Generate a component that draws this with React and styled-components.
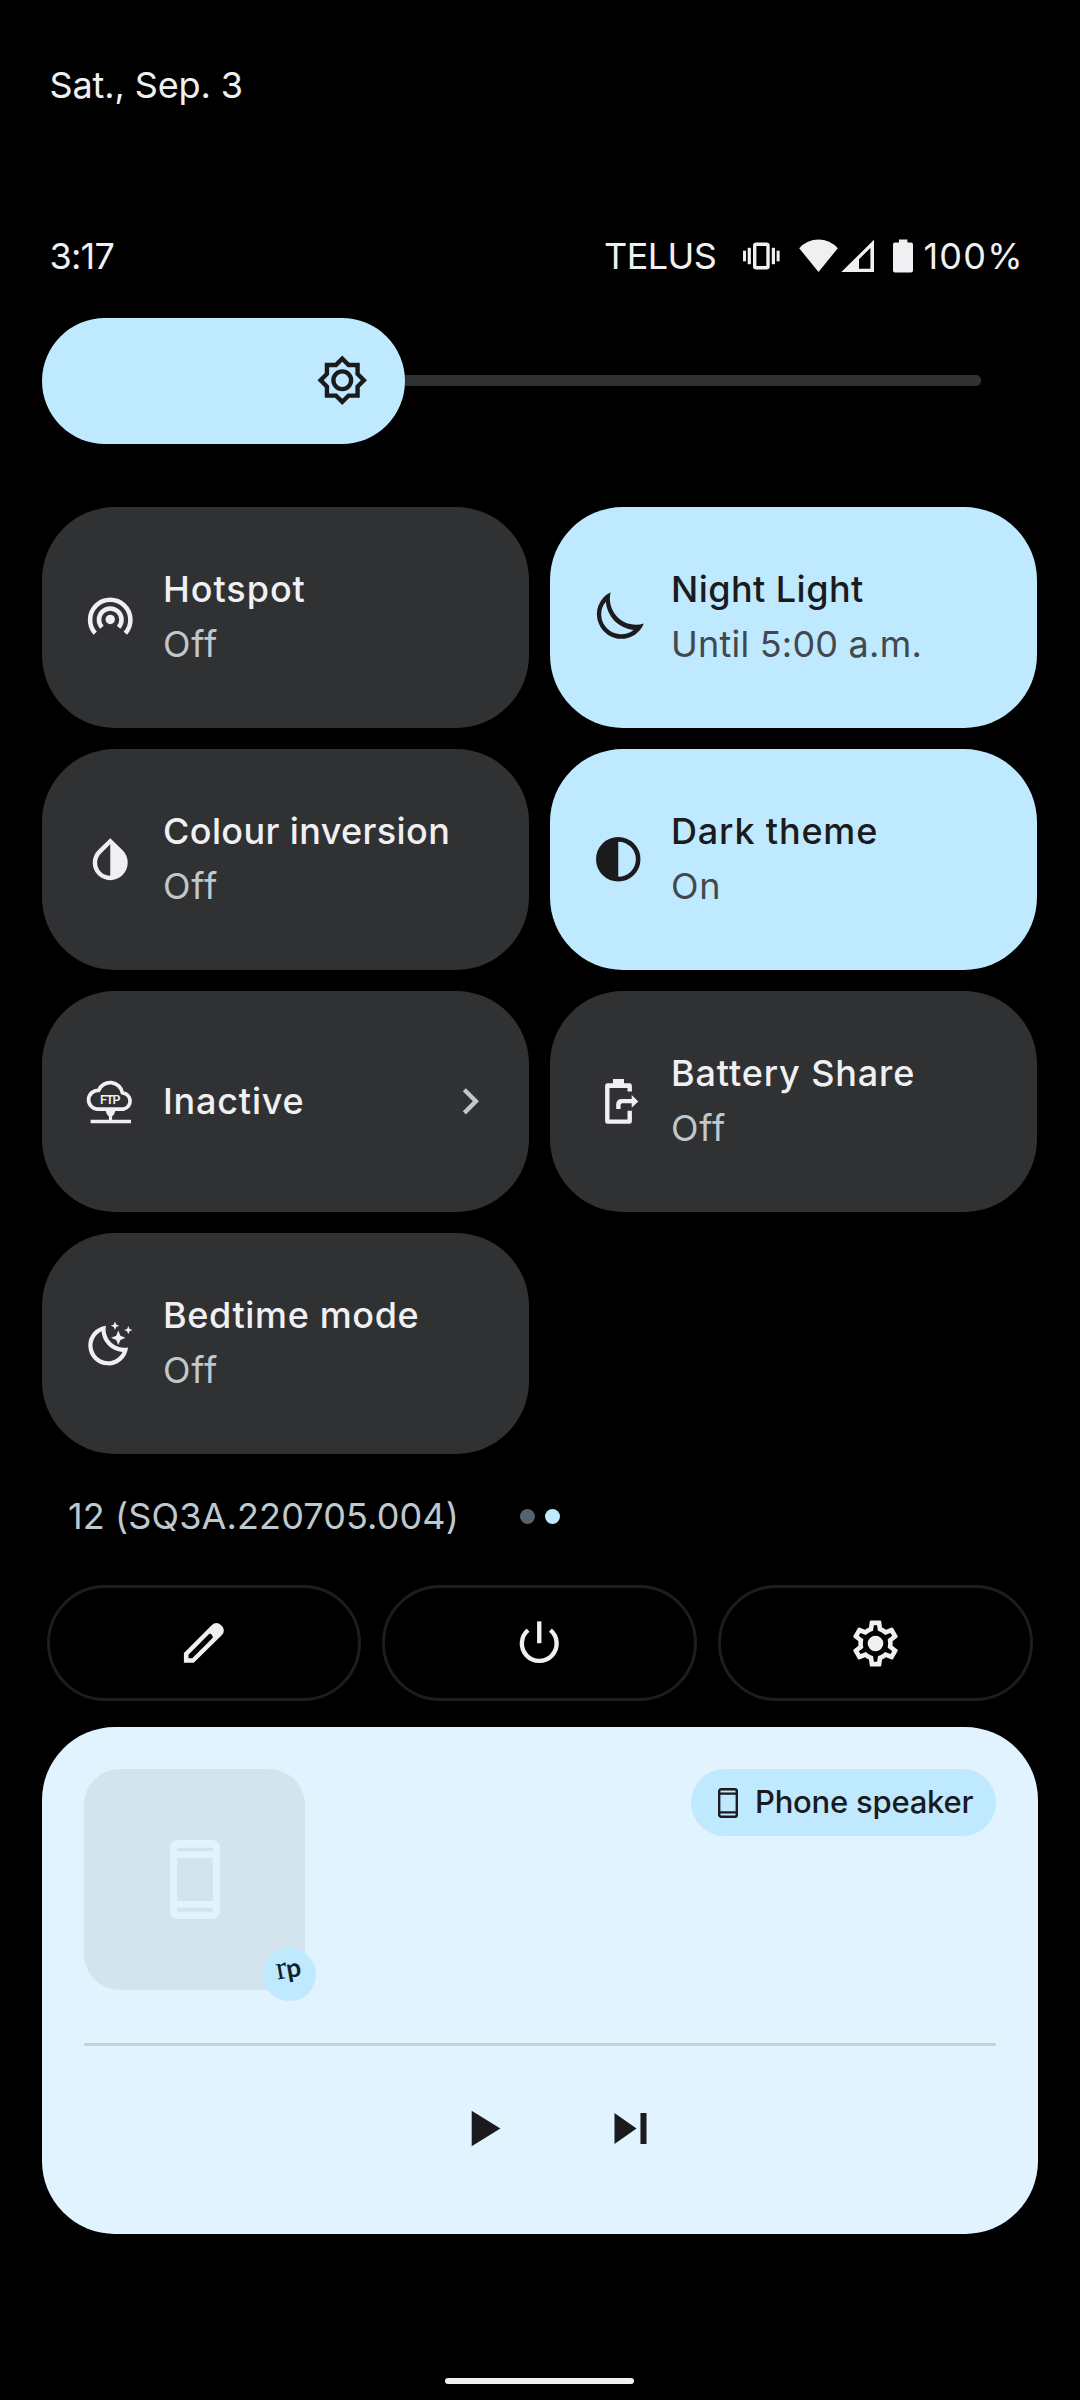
import React from "react";
import styled, { createGlobalStyle } from "styled-components";

const color = {
  surface: "#303133",
  accent: "#bfe9ff",
  light: "#f0f0f3",
  muted: "#bfc8cc",
  dark: "#1b1b1d",
  darkMuted: "#42484b",
  card: "#e0f3ff",
};

const GlobalStyle = createGlobalStyle`
  *, *::before, *::after { box-sizing: border-box; }
  body { margin: 0; background: #000; }
`;

const Screen = styled.main`
  width: 1080px;
  height: 2400px;
  display: flex;
  flex-direction: column;
  overflow: hidden;
  background: #000;
  color: ${color.light};
  font-family: Inter, Roboto, "Liberation Sans", sans-serif;
  font-size: 36px;
  line-height: 44px;
`;

const Label = styled.span`
  white-space: nowrap;
  letter-spacing: ${(p) => p.$tracking || 0}px;
`;

const DateRow = styled.header`
  padding: 63px 0 0 49.5px;
`;

const StatusBar = styled.div`
  display: flex;
  justify-content: space-between;
  align-items: center;
  height: 44px;
  margin-top: 127px;
  padding: 0 56px 0 49.5px;
`;

const StatusIcons = styled.div`
  display: flex;
  align-items: center;
  width: 420px;
`;

const Carrier = styled.div`
  width: 128px;
  display: flex;
`;

const StatusGlyph = styled.svg`
  flex: none;
  display: block;
  width: ${(p) => p.$w}px;
  height: 34px;
  margin-left: ${(p) => p.$gap}px;
  fill: ${color.light};
`;

const BatteryLevel = styled.div`
  margin-left: 10px;
  display: flex;
`;

const Brightness = styled.div`
  display: flex;
  align-items: center;
  margin: 40px 99px 0 42px;
`;

const BrightnessFill = styled.div`
  display: flex;
  align-items: center;
  justify-content: flex-end;
  width: 363px;
  height: 126px;
  padding: 0 36.5px 1px 0;
  border-radius: 63px;
  background: ${color.accent};
  color: ${color.dark};
`;

const BrightnessTrack = styled.div`
  flex: 1;
  height: 11px;
  margin-bottom: 1px;
  border-radius: 0 5px 5px 0;
  background: ${color.surface};
`;

const Icon = styled.svg`
  flex: none;
  display: block;
  width: ${(p) => p.$size || 52.5}px;
  height: ${(p) => p.$size || 52.5}px;
  fill: currentColor;
`;

const TileGrid = styled.section`
  display: grid;
  grid-template-columns: 487px 487px;
  grid-auto-rows: 221px;
  gap: 21px;
  margin: 63px 0 0 42px;
`;

const Tile = styled.div`
  display: flex;
  align-items: center;
  gap: 26.5px;
  padding: 0 33px 0 42px;
  border-radius: 73px;
  background: ${(p) => (p.$active ? color.accent : color.surface)};
  color: ${(p) => (p.$active ? color.dark : color.light)};
`;

const TileText = styled.div`
  flex: 1;
  display: flex;
  flex-direction: column;
  padding-bottom: ${(p) => (p.$single ? 0 : 2)}px;
  line-height: 55px;
`;

const TileTitle = styled(Label)`
  font-weight: 500;
`;

const TileState = styled(Label)`
  color: ${(p) => (p.$active ? color.darkMuted : color.muted)};
`;

const Chevron = styled(Icon)`
  color: ${color.muted};
`;

const BuildRow = styled.div`
  display: grid;
  grid-template-columns: 1fr auto 1fr;
  align-items: center;
  height: 44px;
  margin-top: 40px;
  padding: 0 42px;
`;

const BuildNumber = styled(Label)`
  padding-left: 26px;
  color: ${color.muted};
`;

const Pager = styled.div`
  display: flex;
  gap: 10px;
`;

const PageDot = styled.span`
  width: 15px;
  height: 15px;
  border-radius: 50%;
  background: ${(p) => (p.$current ? color.accent : "#52646d")};
`;

const ActionRow = styled.div`
  display: grid;
  grid-template-columns: repeat(3, 1fr);
  gap: 21px;
  margin: 47px 47px 0 46.5px;
`;

const ActionButton = styled.button`
  display: flex;
  align-items: center;
  justify-content: center;
  height: 116px;
  padding: 0;
  border: 3px solid #1c1d1e;
  border-radius: 58px;
  background: transparent;
  color: ${color.light};
`;

const MediaCard = styled.section`
  display: flex;
  flex-direction: column;
  height: 507px;
  margin: 26px 42px 0;
  padding: 42px;
  border-radius: 73px;
  background: ${color.card};
  color: ${color.dark};
`;

const MediaTop = styled.div`
  display: flex;
  justify-content: space-between;
  align-items: flex-start;
`;

const Artwork = styled.div`
  position: relative;
  display: flex;
  align-items: center;
  justify-content: center;
  width: 221px;
  height: 221px;
  border-radius: 36px;
  background: #d3e4ef;
`;

const ArtworkPhone = styled.svg`
  display: block;
  width: 50px;
  height: 79px;
`;

const AppBadge = styled.div`
  position: absolute;
  right: -11px;
  bottom: -11px;
  width: 53px;
  height: 53px;
  border-radius: 50%;
  background: ${color.accent};
`;

const BadgeMark = styled.svg`
  display: block;
  width: 53px;
  height: 53px;
  fill: #10222c;
`;

const OutputChip = styled.div`
  display: flex;
  align-items: center;
  gap: 17px;
  width: 305px;
  height: 67px;
  padding-left: 27px;
  border-radius: 33.5px;
  background: ${color.accent};
  font-size: 31px;
  font-weight: 500;
  line-height: 40px;
`;

const ChipPhone = styled.svg`
  flex: none;
  display: block;
  width: 20px;
  height: 30px;
`;

const ChipLabel = styled(Label)`
  padding-bottom: 1px;
`;

const SeekBar = styled.div`
  height: 3px;
  margin-top: 53px;
  border-radius: 1.5px;
  background: #c4d2db;
`;

const Controls = styled.div`
  display: flex;
  align-items: center;
  gap: 85.5px;
  height: 63px;
  margin-top: 51px;
  padding-left: 366px;
`;

const HomeHandle = styled.div`
  width: 189px;
  height: 6px;
  margin: 144px 0 0 445px;
  border-radius: 3px;
  background: #f1f1f1;
`;

function BrightnessIcon() {
  return (
    <Icon viewBox="0 0 24 24">
      <path d="M20 8.69V4h-4.69L12 .69 8.69 4H4v4.69L.69 12 4 15.31V20h4.69L12 23.31 15.31 20H20v-4.69L23.31 12 20 8.69zm-2 5.79V18h-3.52L12 20.48 9.52 18H6v-3.52L3.52 12 6 9.52V6h3.52L12 3.52 14.48 6H18v3.52L20.48 12 18 14.48z" />
      <circle cx="12" cy="12" r="4.05" fill="none" stroke="currentColor" strokeWidth="2" />
    </Icon>
  );
}

function HotspotIcon() {
  return (
    <Icon viewBox="0 0 24 24">
      <circle cx="12" cy="13" r="2.15" />
      <g fill="none" stroke="currentColor" strokeWidth="2.1">
        <path d="M8.2 16.6A5.15 5.15 0 1 1 15.8 16.6" />
        <path d="M5.1 19.3A9.2 9.2 0 1 1 18.9 19.3" />
      </g>
    </Icon>
  );
}

function NightIcon() {
  return (
    <Icon viewBox="0 0 24 24">
      <path
        fillRule="evenodd"
        d="M8.5 .6A11.1 11.1 0 0 0 3.1 14.9A11.1 11.1 0 0 0 23.7 14.9A12 12 0 0 1 8.5 .6ZM6.3 4.9A9.1 9.1 0 0 0 19 17.8A14.1 14.1 0 0 1 6.3 4.9Z"
      />
    </Icon>
  );
}

function InvertIcon() {
  return (
    <Icon viewBox="0 0 24 24">
      <path d="M17.66 7.93L12 2.4 6.34 7.93c-3.12 3.12-3.12 8.19 0 11.31C7.9 20.8 9.95 21.58 12 21.58c2.05 0 4.1-.78 5.66-2.34 3.12-3.12 3.12-8.19 0-11.31zM12 19.59c-1.6 0-3.11-.62-4.24-1.76C6.62 16.69 6 15.19 6 13.59s.62-3.11 1.76-4.24L12 5.1v14.49z" />
    </Icon>
  );
}

function ContrastIcon() {
  return (
    <Icon viewBox="0 0 24 24">
      <circle cx="12" cy="12" r="9.1" fill="none" stroke="currentColor" strokeWidth="2.1" />
      <path d="M12 2.5v19a9.5 9.5 0 0 1 0-19z" />
    </Icon>
  );
}

function FtpIcon() {
  return (
    <Icon viewBox="0 0 52.5 52.5">
      <path
        d="M13.2 34.1A9.3 9.3 0 0 1 14.6 15.5A12.4 12.4 0 0 1 38.4 17.9A8.2 8.2 0 0 1 39.6 34.1Z"
        fill="none"
        stroke="currentColor"
        strokeWidth="3.7"
        strokeLinejoin="round"
      />
      <path d="M21.6 35h9.8q-.6 4.6-3.3 6.2v4h-3.2v-4q-2.7-1.6-3.3-6.2z" />
      <path d="M6.6 44.7h40.4v3.6H6.6z" />
      <text x="26.3" y="28.8" textAnchor="middle" fontSize="12.4" fontWeight="600" textLength="20.5">
        FTP
      </text>
    </Icon>
  );
}

function BatteryShareIcon() {
  return (
    <Icon viewBox="0 0 52.5 52.5">
      <path d="M21 4.1h11v4.2h5.5q2.4 0 2.4 2.4v5.7h-4.4v-3.4H17.5v31.5h18v-8.7h4.4v10.5q0 2.5-2.4 2.5H15.5q-2.4 0-2.4-2.5V10.7q0-2.4 2.4-2.4H21z" />
      <path d="M24.2 34.1v-4.6q0-5.6 5.6-5.6h9.9v-3.8l6.6 6.3-6.6 6.3v-4.4h-9.3q-1.8 0-1.8 1.8v4z" />
    </Icon>
  );
}

function Star({ x, y, r }) {
  const k = r * 0.29;
  return (
    <path
      d={`M${x} ${y - r}L${x + k} ${y - k}L${x + r} ${y}L${x + k} ${y + k}L${x} ${y + r}L${x - k} ${y + k}L${x - r} ${y}L${x - k} ${y - k}Z`}
    />
  );
}

function BedtimeIcon() {
  return (
    <Icon viewBox="0 0 52.5 52.5">
      <path
        fillRule="evenodd"
        d="M22 8.7A19.9 19.9 0 1 0 44 30.4A18.4 18.4 0 0 1 22 8.7ZM17.5 14.3A15.7 15.7 0 1 0 38.5 35A22.7 22.7 0 0 1 17.5 14.3Z"
      />
      <Star x={34.3} y={20.8} r={7.2} />
      <Star x={31} y={8.7} r={4.2} />
      <Star x={44.3} y={13.1} r={4.2} />
    </Icon>
  );
}

const tiles = [
  { title: "Hotspot", tracking: 0.95, state: "Off", stateTracking: 0.8, icon: <HotspotIcon /> },
  { title: "Night Light", tracking: 0.45, state: "Until 5:00 a.m.", stateTracking: 0.22, icon: <NightIcon />, active: true },
  { title: "Colour inversion", tracking: 0.37, state: "Off", stateTracking: 0.8, icon: <InvertIcon /> },
  { title: "Dark theme", tracking: 0.83, state: "On", stateTracking: 0.6, icon: <ContrastIcon />, active: true },
  { title: "Inactive", tracking: 0.79, icon: <FtpIcon />, chevron: true },
  { title: "Battery Share", tracking: 0.87, state: "Off", stateTracking: 0.8, icon: <BatteryShareIcon /> },
  { title: "Bedtime mode", tracking: 0.63, state: "Off", stateTracking: 0.8, icon: <BedtimeIcon /> },
];

function QuickTile({ tile }) {
  return (
    <Tile $active={tile.active}>
      {tile.icon}
      <TileText $single={!tile.state}>
        <TileTitle $tracking={tile.tracking}>{tile.title}</TileTitle>
        {tile.state && (
          <TileState $active={tile.active} $tracking={tile.stateTracking}>
            {tile.state}
          </TileState>
        )}
      </TileText>
      {tile.chevron && (
        <Chevron viewBox="0 0 24 24">
          <path d="M10 6L8.59 7.41 13.17 12l-4.58 4.59L10 18l6-6z" />
        </Chevron>
      )}
    </Tile>
  );
}

export default function App() {
  return (
    <Screen>
      <GlobalStyle />
      <DateRow>
        <Label $tracking={-0.13}>Sat., Sep. 3</Label>
      </DateRow>

      <StatusBar>
        <Label $tracking={-0.75}>3:17</Label>
        <StatusIcons>
          <Carrier>
            <Label $tracking={-0.57}>TELUS</Label>
          </Carrier>
          <StatusGlyph $w={37} $gap={12} viewBox="0 0 37 34">
            <rect x="11.7" y="5.3" width="13.3" height="23.4" rx="1.5" fill="none" stroke={color.light} strokeWidth="3.4" />
            <rect x="0" y="11.7" width="3" height="10.6" />
            <rect x="4.7" y="8.8" width="3.2" height="16.4" />
            <rect x="28.8" y="8.8" width="3.2" height="16.4" />
            <rect x="33.6" y="11.7" width="3" height="10.6" />
          </StatusGlyph>
          <StatusGlyph $w={39} $gap={19} viewBox="0 0 39 34">
            <path d="M.2 9.3A25.5 25.5 0 0 1 38.8 9.3L19.5 33z" />
          </StatusGlyph>
          <StatusGlyph $w={33} $gap={3} viewBox="0 0 33 34">
            <path fillRule="evenodd" d="M.3 33L33 .8V33zM18 20.3V29.7H29.4V8.9z" />
          </StatusGlyph>
          <StatusGlyph $w={20} $gap={19} viewBox="0 0 20 34">
            <path d="M6 .4h8.4v3.2H18q2 0 2 2v26q0 2-2 2H2q-2 0-2-2v-26q0-2 2-2h4z" />
          </StatusGlyph>
          <BatteryLevel>
            <Label $tracking={1.3}>100%</Label>
          </BatteryLevel>
        </StatusIcons>
      </StatusBar>

      <Brightness>
        <BrightnessFill>
          <BrightnessIcon />
        </BrightnessFill>
        <BrightnessTrack />
      </Brightness>

      <TileGrid>
        {tiles.map((tile) => (
          <QuickTile key={tile.title} tile={tile} />
        ))}
      </TileGrid>

      <BuildRow>
        <BuildNumber $tracking={0.12}>12 (SQ3A.220705.004)</BuildNumber>
        <Pager>
          <PageDot />
          <PageDot $current />
        </Pager>
      </BuildRow>

      <ActionRow>
        <ActionButton aria-label="Edit">
          <Icon viewBox="0 0 24 24">
            <path
              fillRule="evenodd"
              d="M2.7 16.4L15.5 3.6a2.9 2.9 0 0 1 4.1 0l.5.5a2.9 2.9 0 0 1 0 4.1L7.2 20.9H2.7zM4.8 17.2v1.7h1.7L15.9 9.5l-.2-1-.8-.8-.6 0z"
            />
          </Icon>
        </ActionButton>
        <ActionButton aria-label="Power">
          <Icon viewBox="0 0 24 24">
            <path d="M13 2h-2v10h2V2z" />
            <path d="M6.9 6A7.95 7.95 0 1 0 17.1 6" fill="none" stroke="currentColor" strokeWidth="2" />
          </Icon>
        </ActionButton>
        <ActionButton aria-label="Settings">
          <Icon $size={55} viewBox="0 0 24 24">
            <path d="M19.43 12.98c.04-.32.07-.64.07-.98 0-.34-.03-.66-.07-.98l2.11-1.65c.19-.15.24-.42.12-.64l-2-3.46c-.09-.16-.26-.25-.44-.25-.06 0-.12.01-.17.03l-2.49 1c-.52-.4-1.08-.73-1.69-.98l-.38-2.65C14.46 2.18 14.25 2 14 2h-4c-.25 0-.46.18-.49.42l-.38 2.65c-.61.25-1.17.59-1.69.98l-2.49-1c-.06-.02-.12-.03-.18-.03-.17 0-.34.09-.43.25l-2 3.46c-.13.22-.07.49.12.64l2.11 1.65c-.04.32-.07.65-.07.98 0 .33.03.66.07.98l-2.11 1.65c-.19.15-.24.42-.12.64l2 3.46c.09.16.26.25.44.25.06 0 .12-.01.17-.03l2.49-1c.52.4 1.08.73 1.69.98l.38 2.65c.03.24.24.42.49.42h4c.25 0 .46-.18.49-.42l.38-2.65c.61-.25 1.17-.59 1.69-.98l2.49 1c.06.02.12.03.18.03.17 0 .34-.09.43-.25l2-3.46c.12-.22.07-.49-.12-.64l-2.11-1.65zm-1.98-1.71c.04.31.05.52.05.73 0 .21-.02.43-.05.73l-.14 1.13.89.7 1.08.84-.7 1.21-1.27-.51-1.04-.42-.9.68c-.43.32-.84.56-1.25.73l-1.06.43-.16 1.13-.2 1.35h-1.4l-.19-1.35-.16-1.13-1.06-.43c-.43-.18-.83-.41-1.23-.71l-.91-.7-1.06.43-1.27.51-.7-1.21 1.08-.84.89-.7-.14-1.13c-.03-.31-.05-.54-.05-.74s.02-.43.05-.73l.14-1.13-.89-.7-1.08-.84.7-1.21 1.27.51 1.04.42.9-.68c.43-.32.84-.56 1.25-.73l1.06-.43.16-1.13.2-1.35h1.39l.19 1.35.16 1.13 1.06.43c.43.18.83.41 1.23.71l.91.7 1.06-.43 1.27-.51.7 1.21-1.07.85-.89.7.14 1.13z" />
            <circle cx="12" cy="12" r="3.4" />
          </Icon>
        </ActionButton>
      </ActionRow>

      <MediaCard>
        <MediaTop>
          <Artwork>
            <ArtworkPhone viewBox="0 0 50 79">
              <rect x="0" y="0" width="50" height="79" rx="7.5" fill={color.card} />
              <path d="M7.2 7.7h35.6v3.6H7.2zM7.2 18.1h35.6v42.8H7.2zM7.2 67.7h35.6v4H7.2z" fill="#d3e4ef" />
            </ArtworkPhone>
            <AppBadge>
              <BadgeMark viewBox="0 0 53 53">
                <g transform="rotate(-10 26 28)">
                  <text x="14" y="29.5" fontSize="33" fontFamily='"Liberation Serif", serif'>r</text>
                  <text x="24.5" y="30" fontSize="26" fontWeight="700" fontFamily='Lato, sans-serif'>p</text>
                </g>
              </BadgeMark>
            </AppBadge>
          </Artwork>
          <OutputChip>
            <ChipPhone viewBox="0 0 20 30">
              <rect x="1.2" y="1.2" width="17.6" height="27.6" rx="2" fill="none" stroke={color.dark} strokeWidth="2.4" />
              <path d="M2 4.4h16v2.3H2zM2 23.3h16v2.3H2z" fill={color.dark} />
            </ChipPhone>
            <ChipLabel $tracking={-0.23}>Phone speaker</ChipLabel>
          </OutputChip>
        </MediaTop>
        <SeekBar />
        <Controls>
          <Icon $size={63} viewBox="0 0 24 24">
            <path d="M8.25 5.25v13.5L19.2 12z" />
          </Icon>
          <Icon $size={63} viewBox="0 0 24 24">
            <path d="M5.9 6.1v11.8l8.4-5.9zM15.8 6.1h2.3v11.8h-2.3z" />
          </Icon>
        </Controls>
      </MediaCard>

      <HomeHandle />
    </Screen>
  );
}
